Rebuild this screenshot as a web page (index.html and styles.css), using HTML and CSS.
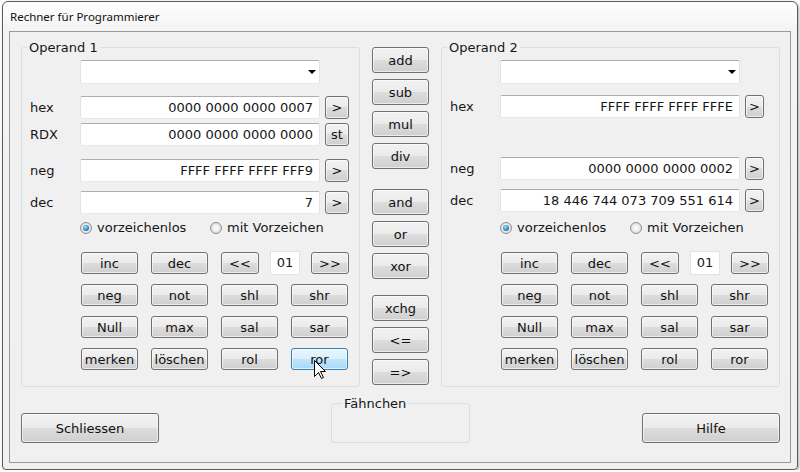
FILE: index.html
```html
<!DOCTYPE html>
<html lang="de">
<head>
<meta charset="utf-8">
<title>Rechner für Programmierer</title>
<link rel="stylesheet" href="styles.css">
</head>
<body>
<div class="window">
  <div class="titlebar">Rechner für Programmierer</div>
  <div class="client">
    <div class="top">
      <fieldset class="group op1">
        <legend>Operand 1</legend>
        <div class="row r-combo"><span class="lbl"></span><div class="combo"><span class="arrow"></span></div></div>
        <div class="row r-hex"><span class="lbl">hex</span><div class="field">0000 0000 0000 0007</div><button class="btn sbtn">&gt;</button></div>
        <div class="row r-rdx"><span class="lbl">RDX</span><div class="field">0000 0000 0000 0000</div><button class="btn sbtn">st</button></div>
        <div class="row r-neg"><span class="lbl">neg</span><div class="field">FFFF FFFF FFFF FFF9</div><button class="btn sbtn">&gt;</button></div>
        <div class="row r-dec"><span class="lbl">dec</span><div class="field">7</div><button class="btn sbtn">&gt;</button></div>
        <div class="radios">
          <label class="opt first"><span class="radio on"></span>vorzeichenlos</label>
          <label class="opt"><span class="radio"></span>mit Vorzeichen</label>
        </div>
        <div class="btns">
          <div class="brow"><button class="btn">inc</button><button class="btn">dec</button><button class="btn nar">&lt;&lt;</button><div class="count">01</div><button class="btn nar">&gt;&gt;</button></div>
          <div class="brow"><button class="btn">neg</button><button class="btn">not</button><button class="btn">shl</button><button class="btn">shr</button></div>
          <div class="brow"><button class="btn">Null</button><button class="btn">max</button><button class="btn">sal</button><button class="btn">sar</button></div>
          <div class="brow"><button class="btn">merken</button><button class="btn">löschen</button><button class="btn">rol</button><button class="btn hot">ror</button></div>
        </div>
      </fieldset>

      <div class="mid">
        <button class="btn">add</button>
        <button class="btn">sub</button>
        <button class="btn">mul</button>
        <button class="btn">div</button>
        <button class="btn g1">and</button>
        <button class="btn">or</button>
        <button class="btn">xor</button>
        <button class="btn g2">xchg</button>
        <button class="btn">&lt;=</button>
        <button class="btn">=&gt;</button>
      </div>

      <fieldset class="group op2">
        <legend>Operand 2</legend>
        <div class="row r-combo"><span class="lbl"></span><div class="combo"><span class="arrow"></span></div></div>
        <div class="row r-hex"><span class="lbl">hex</span><div class="field">FFFF FFFF FFFF FFFE</div><button class="btn sbtn">&gt;</button></div>
        <div class="row r-neg"><span class="lbl">neg</span><div class="field">0000 0000 0000 0002</div><button class="btn sbtn">&gt;</button></div>
        <div class="row r-dec"><span class="lbl">dec</span><div class="field">18 446 744 073 709 551 614</div><button class="btn sbtn">&gt;</button></div>
        <div class="radios">
          <label class="opt first"><span class="radio on"></span>vorzeichenlos</label>
          <label class="opt"><span class="radio"></span>mit Vorzeichen</label>
        </div>
        <div class="btns">
          <div class="brow"><button class="btn">inc</button><button class="btn">dec</button><button class="btn nar">&lt;&lt;</button><div class="count">01</div><button class="btn nar">&gt;&gt;</button></div>
          <div class="brow"><button class="btn">neg</button><button class="btn">not</button><button class="btn">shl</button><button class="btn">shr</button></div>
          <div class="brow"><button class="btn">Null</button><button class="btn">max</button><button class="btn">sal</button><button class="btn">sar</button></div>
          <div class="brow"><button class="btn">merken</button><button class="btn">löschen</button><button class="btn">rol</button><button class="btn">ror</button></div>
        </div>
      </fieldset>
    </div>

    <div class="bottom">
      <button class="btn big">Schliessen</button>
      <fieldset class="flag"><legend>Fähnchen</legend></fieldset>
      <button class="btn big">Hilfe</button>
    </div>
  </div>
</div>
<svg class="cursor" width="12" height="19" viewBox="0 0 12 19"><path d="M0.5 0.5 L0.5 16.5 L4.5 12.5 L7.5 18.5 L9.5 17.5 L6.5 11.5 L11.5 11.5 Z" fill="#fff" stroke="#000" stroke-width="1" stroke-linejoin="miter"/></svg>
</body>
</html>
```

FILE: styles.css
```css
html, body {
  margin: 0;
  background: #ffffff;
}
body {
  font-family: "DejaVu Sans", Verdana, sans-serif;
  font-size: 13px;
  color: #161616;
}
.window {
  margin: 1px 0 0 2px;
  width: 794px;
  height: 467px;
  border: 1px solid #5c5c5c;
  border-radius: 6px 6px 4px 4px;
  background: linear-gradient(#fefefe, #f3f3f3 30px, #f0f0f0);
  box-shadow: 1px 1px 3px rgba(0,0,0,0.35);
  display: flex;
  flex-direction: column;
}
.titlebar {
  height: 29px;
  flex: none;
  line-height: 29px;
  padding-left: 7px;
  font-family: "Noto Sans", "DejaVu Sans", sans-serif;
  font-size: 11.5px;
  color: #111;
}
.client {
  margin: 0 6px 6px;
  width: 780px;
  height: 430px;
  flex: none;
  border: 1px solid #9a9a9a;
  background: #f0f0f0;
}
.top {
  display: flex;
  align-items: flex-start;
  box-sizing: border-box;
  height: 355px;
  padding: 8px 10px 0 11px;
}
fieldset.group {
  margin: 0;
  width: 339px;
  height: 347px;
  box-sizing: border-box;
  min-width: 0;
  padding: 0 8px 14px 8px;
  border: 1px solid #d5dfe5;
  border-radius: 3px;
}
legend {
  margin-left: -3px;
  padding: 0 2px;
  height: 15px;
  line-height: 15px;
  font-size: 13px;
}
.row {
  display: flex;
  align-items: center;
  height: 23px;
}
.lbl {
  width: 50px;
  flex: none;
}
.field, .combo {
  width: 240px;
  height: 23px;
  box-sizing: border-box;
  flex: none;
  border: 1px solid;
  border-color: #abadb3 #e2e3ea #e3e9ef #e2e3ea;
  border-radius: 2px;
  background: #ffffff;
  text-align: right;
  padding-right: 6px;
  line-height: 21px;
  white-space: nowrap;
}
.combo {
  height: 24px;
  display: flex;
  align-items: center;
  justify-content: flex-end;
  padding-right: 3px;
}
.arrow {
  width: 0;
  height: 0;
  border-left: 4px solid transparent;
  border-right: 4px solid transparent;
  border-top: 4px solid #000;
}
.btn {
  font-family: "DejaVu Sans", Verdana, sans-serif;
  font-size: 13px;
  color: #111;
  padding: 0;
  margin: 0;
  box-sizing: border-box;
  border: 1px solid #707070;
  border-radius: 3px;
  background: linear-gradient(#f2f2f2 0%, #ebebeb 50%, #dddddd 50%, #cfcfcf 100%);
  box-shadow: inset 0 0 0 1px rgba(255,255,255,0.6);
}
.btn.hot {
  border-color: #3c7fb1;
  background: linear-gradient(#eaf6fd 0%, #d9f0fc 50%, #bee6fd 50%, #a7d9f5 100%);
}
.sbtn {
  margin-left: 5px;
  width: 24px;
  height: 23px;
  flex: none;
}
.op2 .sbtn {
  width: 19px;
}
.op1 .r-combo { margin-top: 5px; }
.op1 .r-hex { margin-top: 13px; }
.op1 .r-rdx { margin-top: 4px; }
.op1 .r-neg { margin-top: 13px; }
.op1 .r-dec { margin-top: 9px; }

.op2 .r-combo { margin-top: 5px; }
.op2 .r-hex { margin-top: 12px; }
.op2 .r-neg { margin-top: 39px; }
.op2 .r-dec { margin-top: 9px; }

.radios {
  display: flex;
  align-items: center;
  height: 15px;
  padding-left: 50px;
  margin-top: 6px;
  white-space: nowrap;
}
.op2 .radios { margin-top: 8px; }
.opt {
  display: flex;
  align-items: center;
  gap: 5px;
}
.opt.first {
  width: 130px;
}
.radio {
  width: 12px;
  height: 12px;
  box-sizing: border-box;
  border-radius: 50%;
  border: 1px solid #8e8f8f;
  background: radial-gradient(circle at 50% 50%, #ffffff 0, #e8e8e8 55%, #cfcfcf 100%);
  display: inline-flex;
  align-items: center;
  justify-content: center;
  flex: none;
}
.radio.on::after {
  content: "";
  width: 6px;
  height: 6px;
  border-radius: 50%;
  background: radial-gradient(circle at 40% 35%, #a9e4ff 0, #2a80c6 60%, #0f4f8f 100%);
}
.btns {
  margin-top: 17px;
  margin-left: 51px;
  display: flex;
  flex-direction: column;
  gap: 10px;
}
.brow {
  display: flex;
  align-items: center;
  height: 22px;
  gap: 13px;
}
.brow .btn {
  width: 57px;
  height: 22px;
  flex: none;
}
.brow .btn.nar {
  width: 38px;
}
.count {
  width: 30px;
  height: 24px;
  box-sizing: border-box;
  border: 1px solid #e2e3ea;
  background: #fff;
  text-align: center;
  line-height: 22px;
  margin: 0 -2px;
  flex: none;
}
.mid {
  margin: 7px 12px 0;
  width: 57px;
  display: flex;
  flex-direction: column;
  gap: 6px;
  flex: none;
}
.mid .btn {
  height: 26px;
  width: 57px;
}
.mid .g1 { margin-top: 14px; }
.mid .g2 { margin-top: 10px; }
.bottom {
  display: flex;
  justify-content: space-between;
  align-items: flex-end;
  padding: 0 10px 0 11px;
  height: 56px;
}
.big {
  width: 138px;
  height: 30px;
}
fieldset.flag {
  margin: 0;
  padding: 0;
  width: 139px;
  height: 47px;
  box-sizing: border-box;
  border: 1px solid #d5dfe5;
  border-radius: 3px;
}
fieldset.flag legend {
  margin-left: 10px;
}
.cursor {
  position: absolute;
  left: 314px;
  top: 360px;
}
```
